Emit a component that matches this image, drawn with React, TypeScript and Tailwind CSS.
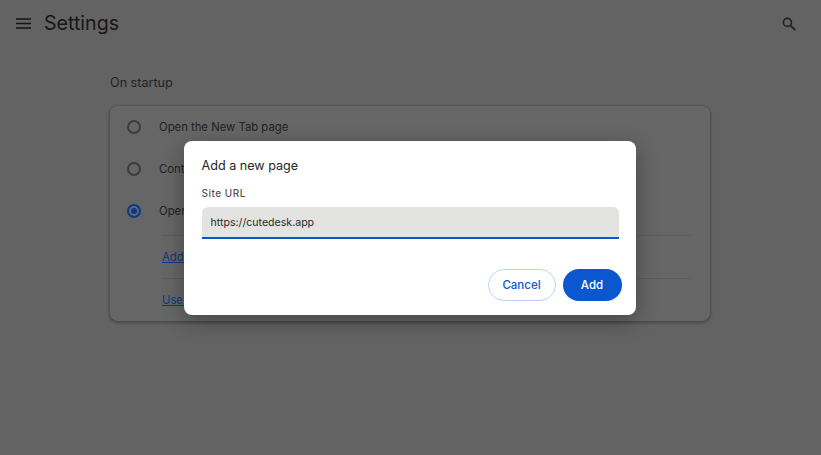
import React from 'react';

const Radio = ({ checked }: { checked?: boolean }) => (
  <span
    className={`flex size-[14px] shrink-0 items-center justify-center rounded-full border-2 ${
      checked ? 'border-[#0a3a8a]' : 'border-[#3c3c3c]'
    }`}
  >
    {checked && <span className="size-[6px] rounded-full bg-[#0a3a8a]" />}
  </span>
);

const startupOptions = [
  { label: 'Open the New Tab page' },
  { label: 'Continue where you left off' },
  { label: 'Open a specific page or set of pages', checked: true },
];

export default function App() {
  return (
    <div className="relative h-[455px] w-[821px] overflow-hidden bg-[#636363] font-['Inter',sans-serif] text-[#1c1c1c]">
      <header className="flex h-[47px] items-center pl-[15.5px] pr-[25px]">
        <svg width="15" height="11" viewBox="0 0 15 11" className="shrink-0">
          <path d="M0 1h15M0 5.5h15M0 10h15" stroke="#151515" strokeWidth="1.7" fill="none" />
        </svg>
        <h1 className="ml-[13.5px] pt-px text-[19.6px] leading-none text-[#171717]">Settings</h1>
        <svg width="14" height="14" viewBox="0 0 14 14" className="ml-auto mt-px shrink-0">
          <circle cx="5.4" cy="5.4" r="4" stroke="#222222" strokeWidth="1.6" fill="none" />
          <path d="M8.4 8.4 13.2 13.2" stroke="#222222" strokeWidth="1.8" fill="none" />
        </svg>
      </header>

      <main className="ml-[110px] w-[600px] pt-[28px]">
        <h2 className="text-[12.6px] leading-4 text-[#222222]">On startup</h2>
        <section className="mt-[15px] h-[215px] rounded-lg bg-[#666666] px-[17px] shadow-[0_1px_3px_1px_rgba(0,0,0,0.28)]">
          {startupOptions.map((option) => (
            <div key={option.label} className="flex h-[42px] items-center gap-[18px] pt-[0.5px] text-[11.3px] text-[#222222]">
              <Radio checked={option.checked} />
              <span>{option.label}</span>
            </div>
          ))}
          <div className="ml-[35px] mr-[2px] mt-[3px] border-t border-[#5c5c5c]">
            <div className="flex h-[42px] items-center text-[11.3px] text-[#0b3a80] underline">Add a new page</div>
            <div className="flex h-[44px] items-center border-t border-[#5c5c5c] text-[11.3px] text-[#0b3a80] underline">
              Use current pages
            </div>
          </div>
        </section>
      </main>

      <div className="absolute left-[184px] top-[141px] flex h-[174px] w-[452px] flex-col rounded-lg bg-white px-[17.5px] shadow-[0_6px_22px_rgba(0,0,0,0.32)]">
        <h3 className="pt-[17px] text-[12.6px] leading-4 text-[#252525]">Add a new page</h3>
        <label className="mt-[13px] text-[10px] font-medium leading-3 tracking-[0.5px] text-[#555555]">Site URL</label>
        <div className="mt-[8px] flex h-8 items-center rounded-t-[6px] border-b-2 border-[#0b57d0] bg-[#e3e3e1] px-[9px] pt-[2px] text-[10.6px] text-[#2a2a2a]">
          https://cutedesk.app
        </div>
        <div className="-mr-[3px] mt-[30px] flex justify-end gap-[7px]">
          <button className="h-8 w-[68px] rounded-full border border-[#bcd3f8] bg-white pt-px text-[11.5px] font-medium text-[#0b57d0]">
            Cancel
          </button>
          <button className="h-8 w-[59px] rounded-full bg-[#0b57d0] pt-px text-[11.5px] font-medium text-white">Add</button>
        </div>
      </div>
    </div>
  );
}
